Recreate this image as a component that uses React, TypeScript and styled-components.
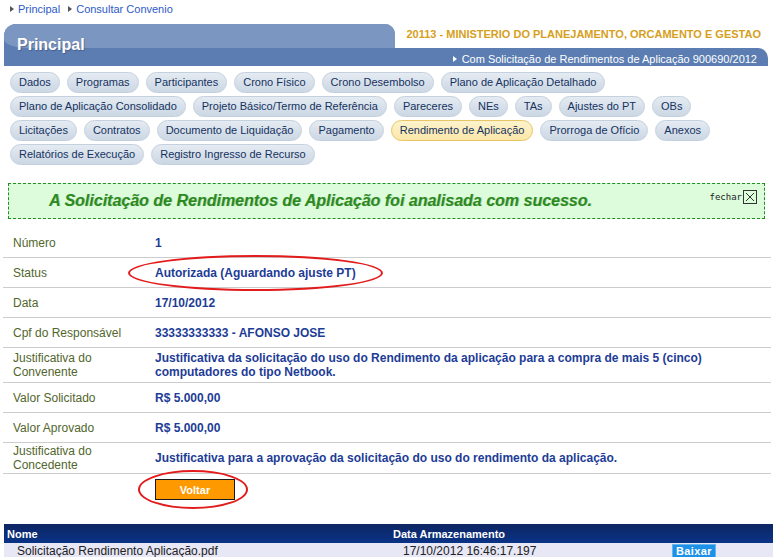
import React from "react";
import styled, { createGlobalStyle } from "styled-components";

const GlobalStyle = createGlobalStyle`
  html, body {
    margin: 0;
    padding: 0;
    background: #ffffff;
  }
  body {
    font-family: "Liberation Sans", Arial, sans-serif;
    font-size: 12px;
    color: #222222;
  }
`;

const Page = styled.div`
  width: 773px;
  height: 557px;
  overflow: hidden;
`;

const Breadcrumb = styled.nav`
  display: flex;
  align-items: center;
  gap: 8px;
  height: 18px;
  padding-left: 10px;
  font-size: 11px;
`;

const Crumb = styled.a`
  display: flex;
  align-items: center;
  gap: 4px;
  color: #2d5bc6;
  text-decoration: none;
  line-height: 15px;
`;

const Arrow = styled.span<{ $color: string }>`
  display: inline-block;
  width: 0;
  height: 0;
  border-left: 4px solid ${(p) => p.$color};
  border-top: 3px solid transparent;
  border-bottom: 3px solid transparent;
`;

const Header = styled.header`
  margin: 6px 0 0 4px;
  width: 764px;
`;

const HeaderTop = styled.div`
  display: flex;
  height: 24px;
`;

const Tab = styled.div`
  width: 391px;
  background: #5b7db1;
  border-radius: 12px 10px 0 0;
`;

const Gloss = styled.div`
  height: 100%;
  box-sizing: border-box;
  padding: 13px 0 0 13px;
  background: #7b97c1;
  border-radius: 12px 10px 0 22px / 12px 10px 0 9px;
`;

const TabTitle = styled.h1`
  margin: 0;
  color: #ffffff;
  font-size: 16px;
  font-weight: bold;
  line-height: 16px;
  text-shadow: 1px 1px 1px rgba(40, 40, 80, 0.35);
`;

const OrgTitle = styled.div`
  flex: 1;
  text-align: right;
  padding: 4px 7px 0 0;
  font-size: 11px;
  font-weight: bold;
  line-height: 13px;
  color: #d6a01c;
`;

const Bar = styled.div`
  height: 18px;
  box-sizing: border-box;
  padding: 3px 11px 0 0;
  display: flex;
  justify-content: flex-end;
  align-items: center;
  gap: 5px;
  background: #5b7db1;
  border-top-right-radius: 10px;
  color: #ffffff;
  font-size: 11px;
`;

const Tabs = styled.div`
  display: flex;
  flex-wrap: wrap;
  gap: 3px 7px;
  margin: 6px 0 0 10px;
  width: 745px;
`;

const TabButton = styled.span<{ $active?: boolean }>`
  height: 21px;
  box-sizing: border-box;
  padding: 0 8px;
  border: 1px solid ${(p) => (p.$active ? "#e7c465" : "#c4d0dd")};
  border-radius: 11px;
  background: ${(p) =>
    p.$active
      ? "linear-gradient(#fdf3cc, #fbe7a8)"
      : "linear-gradient(#e5ebf2, #cbd7e4)"};
  color: #15325f;
  font-size: 11px;
  line-height: 19px;
  white-space: nowrap;
`;

const Message = styled.div`
  margin: 18px 0 0 8px;
  width: 757px;
  height: 36px;
  box-sizing: border-box;
  padding: 0 7px 0 40px;
  display: flex;
  align-items: center;
  border: 1px dashed #1f8f1f;
  background: #dcfcdc;
`;

const MessageText = styled.p`
  margin: 0;
  font-size: 16px;
  font-weight: bold;
  font-style: italic;
  color: #2b8a1e;
  text-shadow: 1px 0 0 rgba(30, 80, 0, 0.25);
`;

const Close = styled.span`
  margin-left: auto;
  align-self: flex-start;
  margin-top: 6px;
  display: flex;
  align-items: center;
  gap: 1px;
  font-family: "DejaVu Sans Mono", monospace;
  font-size: 9px;
  color: #222222;
`;

const Details = styled.div`
  margin: 9px 0 0 3px;
  width: 768px;
`;

const Row = styled.div<{ $dense?: boolean }>`
  display: grid;
  grid-template-columns: 152px 1fr;
  align-items: center;
  box-sizing: border-box;
  min-height: 30px;
  padding: ${(p) => (p.$dense ? "1px 0" : "3px 0")};
  border-bottom: 1px solid #cccccc;
`;

const Label = styled.div`
  padding-left: 10px;
  color: #52662c;
  line-height: 14px;
`;

const Value = styled.div`
  padding-right: 40px;
  color: #1d3c96;
  font-weight: bold;
  line-height: 14px;
`;

const Annotated = styled.span`
  position: relative;
  display: inline-block;
`;

const Ring = styled.span<{ $t: number; $r: number; $b: number; $l: number }>`
  position: absolute;
  top: ${(p) => p.$t}px;
  right: ${(p) => p.$r}px;
  bottom: ${(p) => p.$b}px;
  left: ${(p) => p.$l}px;
  border: 2px solid #e31b1b;
  border-radius: 50%;
  pointer-events: none;
`;

const ButtonRow = styled.div`
  padding: 5px 0 0 155px;
  margin-bottom: 24px;
`;

const Voltar = styled.button`
  display: block;
  width: 80px;
  height: 21px;
  padding: 0;
  border: 1px solid #1a1a1a;
  background: #ff9900;
  color: #ffffff;
  font-family: inherit;
  font-size: 11px;
  font-weight: bold;
`;

const Attachments = styled.div`
  margin-left: 4px;
`;

const AttachHead = styled.div`
  display: grid;
  grid-template-columns: 386px 279px 1fr;
  align-items: center;
  height: 19px;
  background: linear-gradient(#0d2563, #0a3386);
  color: #ffffff;
  font-size: 11px;
  font-weight: bold;
`;

const HeadCell = styled.div`
  padding-left: 3px;
`;

const AttachRow = styled.div`
  display: grid;
  grid-template-columns: 386px 279px 1fr;
  align-items: center;
  height: 16px;
  background: #e7e7f6;
  color: #222222;
`;

const BodyCell = styled.div`
  padding-left: 13px;
`;

const Baixar = styled.span`
  display: inline-block;
  margin-left: 3px;
  height: 15px;
  box-sizing: border-box;
  padding: 0 3px;
  border: 1px solid #67b5f0;
  background: #1d90e8;
  color: #ffffff;
  font-size: 11px;
  font-weight: bold;
  line-height: 13px;
  letter-spacing: 0.4px;
`;

const tabs = [
  "Dados",
  "Programas",
  "Participantes",
  "Crono Físico",
  "Crono Desembolso",
  "Plano de Aplicação Detalhado",
  "Plano de Aplicação Consolidado",
  "Projeto Básico/Termo de Referência",
  "Pareceres",
  "NEs",
  "TAs",
  "Ajustes do PT",
  "OBs",
  "Licitações",
  "Contratos",
  "Documento de Liquidação",
  "Pagamento",
  "Rendimento de Aplicação",
  "Prorroga de Ofício",
  "Anexos",
  "Relatórios de Execução",
  "Registro Ingresso de Recurso",
];

const CloseIcon = () => (
  <svg width="14" height="14" viewBox="0 0 14 14">
    <rect x="0.5" y="0.5" width="13" height="13" fill="none" stroke="#333" />
    <path d="M3 3 L11 11 M11 3 L3 11" stroke="#333" strokeWidth="1" />
  </svg>
);

const App = () => {
  return (
    <Page>
      <GlobalStyle />
      <Breadcrumb>
        <Crumb>
          <Arrow $color="#555" />
          Principal
        </Crumb>
        <Crumb>
          <Arrow $color="#555" />
          Consultar Convenio
        </Crumb>
      </Breadcrumb>

      <Header>
        <HeaderTop>
          <Tab>
            <Gloss>
              <TabTitle>Principal</TabTitle>
            </Gloss>
          </Tab>
          <OrgTitle>20113 - MINISTERIO DO PLANEJAMENTO, ORCAMENTO E GESTAO</OrgTitle>
        </HeaderTop>
        <Bar>
          <Arrow $color="#fff" />
          Com Solicitação de Rendimentos de Aplicação 900690/2012
        </Bar>
      </Header>

      <Tabs>
        {tabs.map((t) => (
          <TabButton key={t} $active={t === "Rendimento de Aplicação"}>
            {t}
          </TabButton>
        ))}
      </Tabs>

      <Message>
        <MessageText>A Solicitação de Rendimentos de Aplicação foi analisada com sucesso.</MessageText>
        <Close>
          fechar
          <CloseIcon />
        </Close>
      </Message>

      <Details>
        <Row>
          <Label>Número</Label>
          <Value>1</Value>
        </Row>
        <Row>
          <Label>Status</Label>
          <Value>
            <Annotated>
              Autorizada (Aguardando ajuste PT)
              <Ring $t={-11} $r={-27} $b={-11} $l={-27} />
            </Annotated>
          </Value>
        </Row>
        <Row>
          <Label>Data</Label>
          <Value>17/10/2012</Value>
        </Row>
        <Row>
          <Label>Cpf do Responsável</Label>
          <Value>33333333333 - AFONSO JOSE</Value>
        </Row>
        <Row>
          <Label>
            Justificativa do
            <br />
            Convenente
          </Label>
          <Value>
            Justificativa da solicitação do uso do Rendimento da aplicação para a compra de mais 5
            (cinco) computadores do tipo Netbook.
          </Value>
        </Row>
        <Row>
          <Label>Valor Solicitado</Label>
          <Value>R$ 5.000,00</Value>
        </Row>
        <Row>
          <Label>Valor Aprovado</Label>
          <Value>R$ 5.000,00</Value>
        </Row>
        <Row $dense>
          <Label>
            Justificativa do
            <br />
            Concedente
          </Label>
          <Value>Justificativa para a aprovação da solicitação do uso do rendimento da aplicação.</Value>
        </Row>
      </Details>

      <ButtonRow>
        <Annotated>
          <Voltar>Voltar</Voltar>
          <Ring $t={-9} $r={-13} $b={-9} $l={-17} />
        </Annotated>
      </ButtonRow>

      <Attachments>
        <AttachHead>
          <HeadCell>Nome</HeadCell>
          <HeadCell>Data Armazenamento</HeadCell>
          <HeadCell />
        </AttachHead>
        <AttachRow>
          <BodyCell>Solicitação Rendimento Aplicação.pdf</BodyCell>
          <BodyCell>17/10/2012 16:46:17.197</BodyCell>
          <div>
            <Baixar>Baixar</Baixar>
          </div>
        </AttachRow>
      </Attachments>
    </Page>
  );
};

export default App;
